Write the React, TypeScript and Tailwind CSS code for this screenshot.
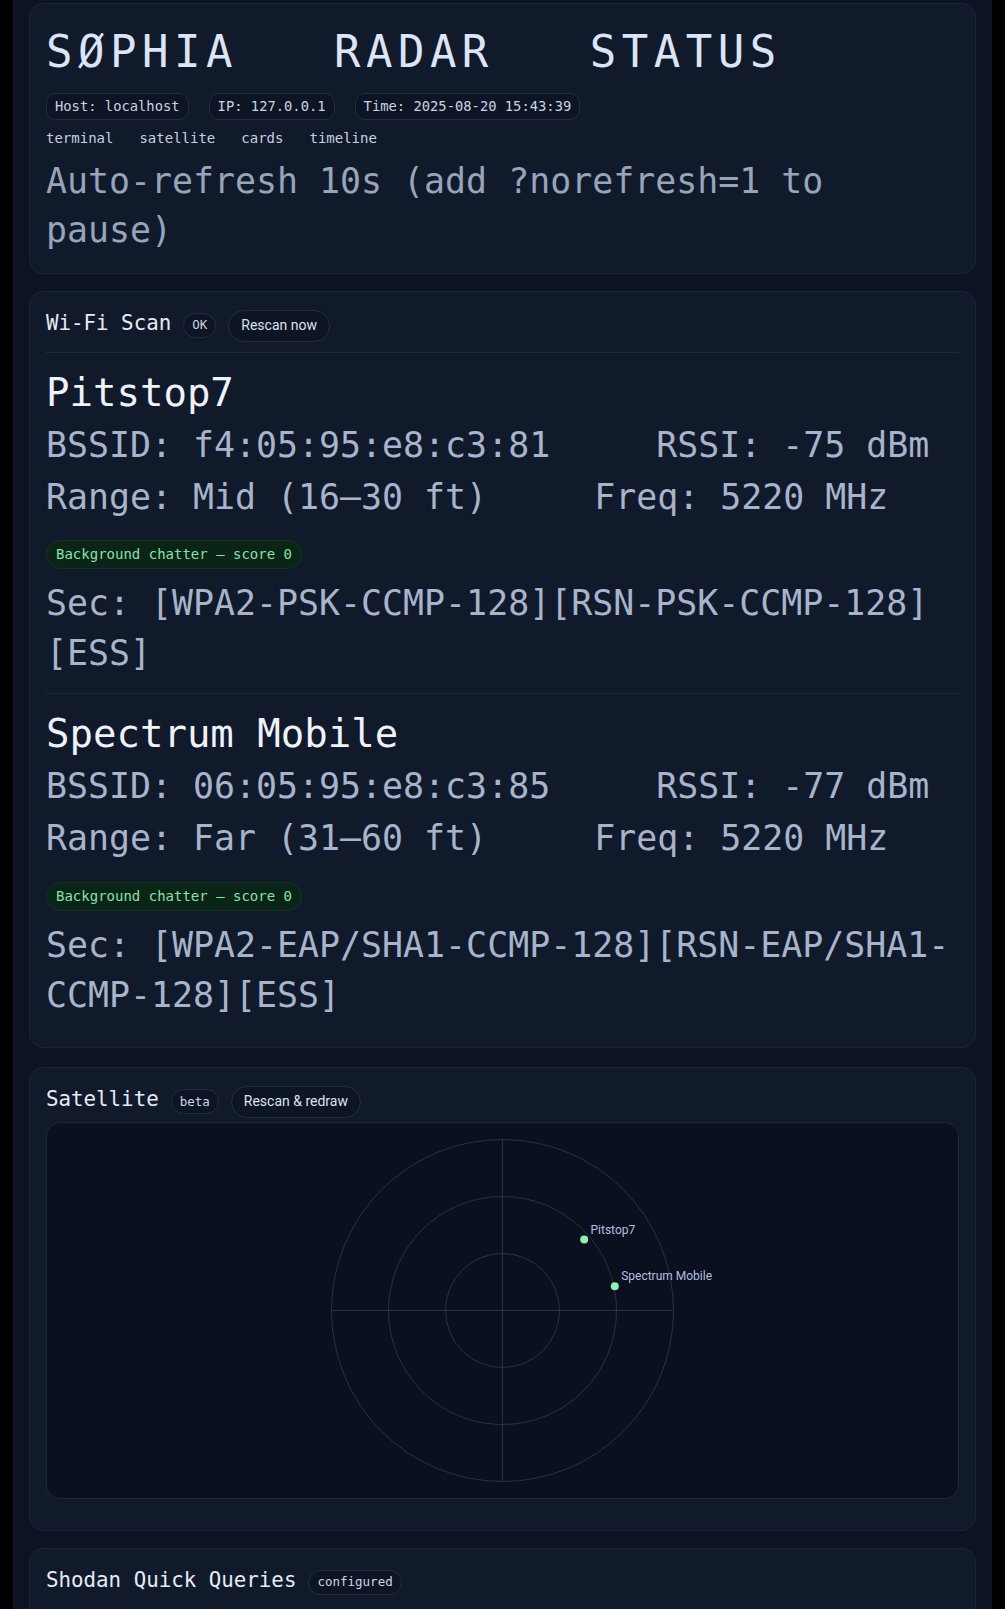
import React from "react";

const mono = "font-['DejaVu_Sans_Mono',monospace]";
const sans = "font-['Roboto',sans-serif]";

const networks = [
  {
    ssid: "Pitstop7",
    bssid: "f4:05:95:e8:c3:81",
    rssi: -75,
    range: "Mid (16–30 ft)",
    freq: 5220,
    chatter: 0,
    sec: "[WPA2-PSK-CCMP-128][RSN-PSK-CCMP-128][ESS]",
  },
  {
    ssid: "Spectrum Mobile",
    bssid: "06:05:95:e8:c3:85",
    rssi: -77,
    range: "Far (31–60 ft)",
    freq: 5220,
    chatter: 0,
    sec: "[WPA2-EAP/SHA1-CCMP-128][RSN-EAP/SHA1-CCMP-128][ESS]",
  },
];

function Pill(props: { children: React.ReactNode }) {
  return (
    <span className="flex h-[27px] items-center rounded-[10px] border border-[#222d42] bg-[#0d1424] px-2 text-[13.8px] text-[#c9d3e3]">
      {props.children}
    </span>
  );
}

function CardHeader(props: { title: string; tag: string; action?: string }) {
  return (
    <div className="flex h-[32px] items-center gap-3">
      <h2 className="mb-[6px] text-[20.8px] leading-[26px] text-[#e6ebf3]">{props.title}</h2>
      <span className="flex h-[25px] items-center rounded-full border border-[#232e44] bg-[#0d1423] px-2 text-[12.5px] text-[#cdd6e4]">
        {props.tag}
      </span>
      {props.action && (
        <button className={`h-[32px] rounded-full border border-[#232e44] bg-[#0d1423] px-3 text-[14px] text-[#dce3ee] ${sans}`}>
          {props.action}
        </button>
      )}
    </div>
  );
}

function Network(props: { n: (typeof networks)[number]; last: boolean }) {
  const n = props.n;
  return (
    <div className="pt-[14px]">
      <div className="text-[39px] leading-[52px] text-[#eef2f9]">{n.ssid}</div>
      <div className="text-[34.9px] leading-[52px] text-[#a7b4cb]">
        <div className="whitespace-nowrap">
          <span>BSSID: {n.bssid}</span>
          <span className="ml-[106px]">RSSI: {n.rssi} dBm</span>
        </div>
        <div className="whitespace-nowrap">
          <span>Range: {n.range}</span>
          <span className="ml-[107px]">Freq: {n.freq} MHz</span>
        </div>
      </div>
      <div className="mt-[17.5px] flex">
        <span className="flex h-[29px] items-center rounded-full border border-[#12351f] bg-[#0a2417] px-[9px] text-[14px] text-[#86e3a6]">
          Background chatter — score {n.chatter}
        </span>
      </div>
      <p className="mt-[9.4px] text-[34.9px] leading-[50px] text-[#a7b4cb]">Sec: {n.sec}</p>
      {!props.last && <div className="mt-[14.7px] h-px bg-[#1f293b]" />}
    </div>
  );
}

function Radar() {
  const cx = 455;
  const cy = 187.5;
  return (
    <div className="mt-[3.7px] h-[377px] rounded-[14px] border border-[#1d2739] bg-[#0a101d]">
      <svg viewBox="0 0 910 375" className="h-full w-full">
        <g fill="none" stroke="#26314a" strokeWidth="1">
          <circle cx={cx} cy={cy} r="57" />
          <circle cx={cx} cy={cy} r="114" />
          <circle cx={cx} cy={cy} r="171" />
          <line x1={cx - 171} y1={cy} x2={cx + 171} y2={cy} />
          <line x1={cx} y1={cy - 171} x2={cx} y2={cy + 171} />
        </g>
        <circle cx="536.7" cy="116.6" r="4" fill="#8ff0b4" />
        <text x="543" y="110.6" fontSize="12" fill="#b3bfe3" fontFamily="Roboto, sans-serif">
          Pitstop7
        </text>
        <circle cx="567.3" cy="163.3" r="4" fill="#8ff0b4" />
        <text x="573.7" y="157.3" fontSize="12" fill="#b3bfe3" fontFamily="Roboto, sans-serif">
          Spectrum Mobile
        </text>
      </svg>
    </div>
  );
}

export default function App() {
  return (
    <div className={`min-h-screen bg-black ${mono}`}>
      <div className="mx-[13px] min-h-screen bg-[#0c1322] px-4 pt-[3px] pb-8">
        <div className="flex flex-col gap-[17px]">
          {/* status header */}
          <section className="rounded-[14px] border border-[#1c2538] bg-[#111a2b] px-4 pt-4 pb-[18px]">
            <h1 className="whitespace-pre text-[44px] leading-[64px] tracking-[5.5px] text-[#dbe5f6]">
              {"SØPHIA   RADAR   STATUS"}
            </h1>
            <div className="mt-[9px] flex gap-5">
              <Pill>Host: localhost</Pill>
              <Pill>IP: 127.0.0.1</Pill>
              <Pill>Time: 2025-08-20 15:43:39</Pill>
            </div>
            <nav className="mt-[8px] flex gap-[26px] text-[14px] leading-[20px] text-[#c6d0e0]">
              <a>terminal</a>
              <a>satellite</a>
              <a>cards</a>
              <a>timeline</a>
            </nav>
            <p className="mt-[8.5px] text-[34.9px] leading-[49px] text-[#97a4ba]">
              Auto-refresh 10s (add ?norefresh=1 to pause)
            </p>
          </section>

          {/* wifi */}
          <section className="rounded-[14px] border border-[#1c2538] bg-[#111a2b] px-4 pt-[18px] pb-[27px]">
            <CardHeader title="Wi-Fi Scan" tag="OK" action="Rescan now" />
            <div className="mt-[10px] h-px bg-[#1f293b]" />
            {networks.map((n, i) => (
              <Network key={n.bssid} n={n} last={i === networks.length - 1} />
            ))}
          </section>

          {/* satellite */}
          <section className="mt-[2px] rounded-[14px] border border-[#1c2538] bg-[#111a2b] px-4 pt-[18px] pb-[31px]">
            <CardHeader title="Satellite" tag="beta" action="Rescan & redraw" />
            <Radar />
          </section>

          {/* shodan */}
          <section className="min-h-[200px] rounded-[14px] border border-[#1c2538] bg-[#111a2b] px-4 pt-[18px] pb-6">
            <CardHeader title="Shodan Quick Queries" tag="configured" />
          </section>
        </div>
      </div>
    </div>
  );
}
